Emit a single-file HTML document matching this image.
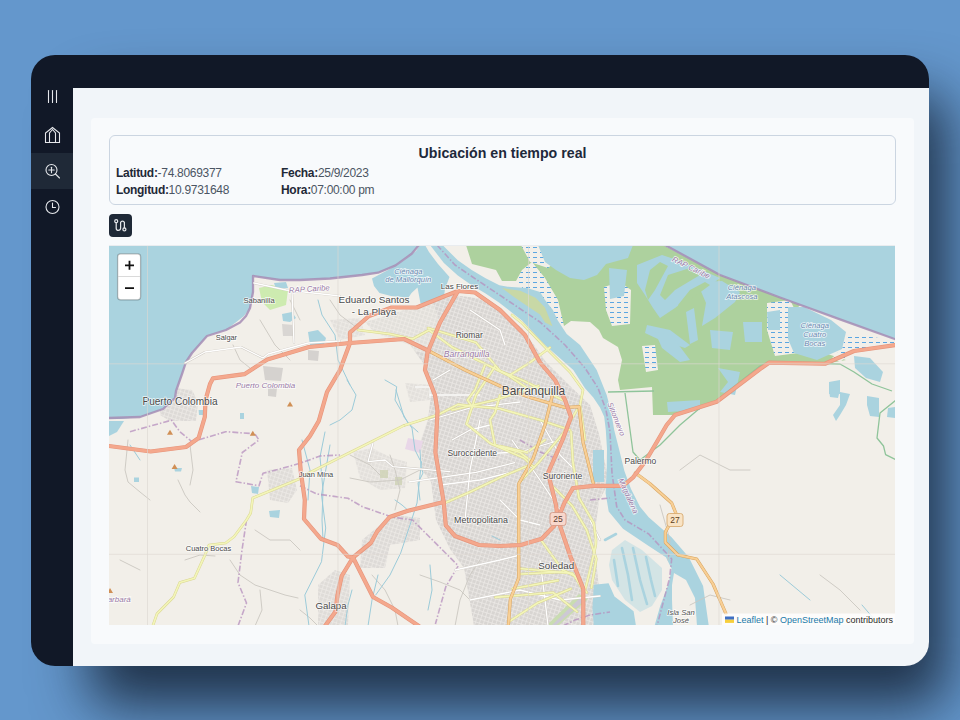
<!DOCTYPE html>
<html><head><meta charset="utf-8">
<style>
*{box-sizing:border-box;margin:0;padding:0}
html,body{width:960px;height:720px;overflow:hidden}
body{background:#6497cc;font-family:"Liberation Sans",sans-serif;position:relative}
#shadow{position:absolute;left:71px;top:55px;width:858px;height:611px;border-radius:24px;box-shadow:18px 40px 55px 0 rgba(5,12,25,.72)}
#frame{position:absolute;left:31px;top:55px;width:898px;height:611.4px;border-radius:24px;background:#111827;overflow:hidden}
#content{position:absolute;left:42px;top:33px;right:0;bottom:0;background:#f1f5f9}
#card{position:absolute;left:60px;top:62.5px;width:822.5px;height:526px;background:#f8fafc;border-radius:4px}
.abs{position:absolute}
#active{position:absolute;left:0;top:98px;width:42px;height:36px;background:#1f2937}
#info{position:absolute;left:78px;top:80px;width:787px;height:70px;border:1px solid #cbd5e1;border-radius:6px}
#title{position:absolute;left:0;right:0;top:9px;text-align:center;font-size:14.2px;font-weight:bold;color:#1e293b}
.row{position:absolute;font-size:12px;letter-spacing:-0.3px;color:#4b5563;white-space:nowrap}
.row b{color:#1f2937}
#btn{position:absolute;left:78px;top:159px;width:22.5px;height:22.5px;background:#1f2937;border-radius:4px}
#map{position:absolute;left:78px;top:189.7px;width:786px;height:380.8px;background:#f2efe9;overflow:hidden}
</style></head><body>
<div id="shadow"></div>
<div id="frame">
  <div id="active"></div>
  <svg class="abs" style="left:0;top:0" width="42" height="170" viewBox="0 0 42 170">
    <g stroke="#e5e7eb" stroke-width="1.1" stroke-linecap="round" fill="none">
      <line x1="17.5" y1="35.5" x2="17.5" y2="47.5"/><line x1="21.5" y1="35.5" x2="21.5" y2="47.5"/><line x1="25.5" y1="35.5" x2="25.5" y2="47.5"/>
      <path d="M14.5 87.5 V78 L21.5 72.5 L28.5 78 V87.5 Z"/>
      <path d="M18.5 87.5 V78 L21.5 74.5 L24.5 78 V87.5"/>
      <circle cx="20.5" cy="115" r="5.5"/><line x1="24.5" y1="119" x2="28.5" y2="123"/>
      <line x1="17.8" y1="115" x2="23.2" y2="115"/><line x1="20.5" y1="112.3" x2="20.5" y2="117.7"/>
      <circle cx="21.5" cy="152" r="6.5"/><path d="M21.5 148 V152.5 H24.5"/>
    </g>
  </svg>
  <div id="content"></div>
  <div id="card"></div>
  <div id="info">
    <div id="title">Ubicación en tiempo real</div>
    <div class="row" style="left:6px;top:29.6px"><b>Latitud:</b>-74.8069377</div>
    <div class="row" style="left:6px;top:46.6px"><b>Longitud:</b>10.9731648</div>
    <div class="row" style="left:171px;top:29.6px"><b>Fecha:</b>25/9/2023</div>
    <div class="row" style="left:171px;top:46.6px"><b>Hora:</b>07:00:00 pm</div>
  </div>
  <div id="btn"><svg width="22.5" height="22.5" viewBox="0 0 22.5 22.5" style="display:block"><g fill="none" stroke="#e5e7eb" stroke-width="1.25" stroke-linecap="round" stroke-linejoin="round"><circle cx="7.2" cy="7.2" r="1.5"/><circle cx="15.4" cy="15.4" r="1.5"/><path d="M7.2 8.7V14.2A2.2 2.2 0 0 0 11.6 14.2V8.5A2 2 0 0 1 15.4 8.5V13.9"/></g></svg></div>
  <div id="map"><svg width="786.5" height="380.5" viewBox="109 245 786.5 380.5" style="display:block;position:absolute;left:0;top:0">
<defs>
<pattern id="urb" width="4" height="4" patternUnits="userSpaceOnUse" patternTransform="rotate(18)">
<rect width="4" height="4" fill="#d8d5d2"/><path d="M0 0.4H4M0.4 0V4" stroke="#eceae7" stroke-width="0.8"/>
</pattern>
<pattern id="marsh" width="7" height="5" patternUnits="userSpaceOnUse">
<rect width="7" height="5" fill="#f2efe9"/><path d="M1 2.5H5" stroke="#4a9ee0" stroke-width="0.9"/>
</pattern>
</defs>
<rect x="109" y="245" width="786.5" height="380.5" fill="#f2efe9"/>
<!-- urban -->
<path fill="url(#urb)" d="M445,294 L484,299 522,328 546,362 570,386 590,405 599,434 609,482 599,501 594,540 599,588 599,626 474,626 464,568 450,549 436,520 431,482 422,470 421,440 428,419 431,395 426,367 410,345 375,333 365,322 392,314 436,299Z"/>
<path fill="url(#urb)" opacity="0.8" d="M362,540 L380,525 395,515 420,518 420,540 390,545 385,568 360,568Z"/>
<path fill="url(#urb)" opacity="0.75" d="M267,470 L292,468 297,490 288,503 270,500Z"/>
<path fill="url(#urb)" opacity="0.8" d="M160,395 L175,388 192,390 198,402 196,421 170,421 160,415Z"/>
<path fill="url(#urb)" opacity="0.75" d="M318,585 L335,570 350,575 348,626 318,626Z"/>
<path fill="#f2efe9" opacity="0.4" d="M352,311 L432,300 440,322 427,352 352,352Z"/>
<!-- green wetlands -->
<path fill="#add19e" d="M466,245 L663,245 720,275 780,297.5 800,305 787,320 800,345 846,360 825,364 769,363 760,369 717,402 675,415 653,415 652,387 620,390 618,380 622,360 618,347 603,338 599,330 590,322 571,321 564,326 545,300 522,281 502,281 496,270 472,264Z"/>
<!-- marsh -->
<path fill="url(#marsh)" d="M516,281 L522,270 532,262 545,278 558,300 564,326 548,318 532,298Z"/>
<path fill="url(#marsh)" d="M521,245 L545,245 560,258 548,268 530,262Z"/>
<path fill="url(#marsh)" d="M604,287 L620,282 631,290 630,324 612,326 606,310Z"/>
<path fill="url(#marsh)" d="M767,303 L790,300 800,320 798,353 775,356 767,330Z"/>
<path fill="url(#marsh)" d="M846,334 L896,340 896,346 854,351 840,362 832,358 842,349Z"/>
<path fill="url(#marsh)" d="M642,346 L655,345 658,370 646,372Z"/>
<!-- water in green -->
<g fill="#aad3df">
<path d="M538,245 L633,245 628,258 606,264 597,275 584,280 570,278 556,270 545,262Z"/>
<path d="M609,268 L627,270 624,296 610,299Z"/>
<path d="M637,265 L662,255 683,262 713,275 720,278 707,288 692,295 675,308 660,318 653,308 645,295 637,283Z"/>
<path d="M743,322 L762,322 762,342 745,342Z"/>
<path d="M647,325 L670,330 690,345 685,348 660,340 645,333Z"/>
<path d="M655,332 L672,336 690,360 680,362 662,348Z"/>
<path d="M710,330 L733,332 730,350 712,348Z"/>
<path d="M667,402 L700,400 700,410 668,412Z"/>
<path d="M718,368 L740,372 735,395 720,392 728,382Z"/>
<path d="M767,312 L780,310 780,330 768,330Z"/>
<path d="M697,282 L722,281 740,292 735,302 715,318 702,326 706,303Z"/>
<path d="M686,312 L694,308 698,340 690,344Z"/>
<path d="M788,307 L804,307 831,320 846,332 842,349 817,360 794,353 788,339Z"/>
</g>
<g fill="#add19e">
<path d="M650,270 L660,262 668,266 655,290 648,300 645,290Z"/>
<path d="M668,275 L690,268 700,275 675,290 665,300 660,295Z"/>
<path d="M690,290 L705,282 710,285 690,300 680,310 678,305Z"/>
</g>
<!-- seas -->
<g fill="#aad3df">
<path d="M109,245 L419,245 411.7,253.75 395.6,265.4 378,272.7 362,275 330,278.5 300,280 280,280 253,276 253,292 250,308 244,316 226,330 209,335 207,336 192,353 186,362 182,374 176,391 175,398 163,409 140,417 121,419 109,419Z"/>
<path d="M109,421 L124,421 117,432 109,436Z"/>
<path d="M663,245 L896,245 896,339.5 840,319.4 780,297.5 720,275Z"/>
<path d="M372,278.5 L388,270 403,261 416,251 420,245 425,245 429,252 438,264 449.5,277 445,289 444,296 432,302 420.5,303.5 417.5,287.5 411.5,293 408.5,297.5 391,296 379.5,293 374,286Z"/>
<!-- river -->
<path d="M430,245 L443.9,263 457.8,275.6 471.7,285.3 485.6,293.6 499,302.5 515,315 522,320.5 545,345 573.3,370 585,388.3 593.3,397.5 600,407.5 604.2,416.7 605.8,430 607,449 606.7,471 605.6,493.3 608.7,511.5 623,528.7 648.7,545.9 665.9,557.3 671.6,568.7 668.8,583 660.2,606 654.5,626 708.8,626 703.1,585.9 688.8,557.3 671.6,537.3 648.7,517.3 640,506.7 631,488.9 624.4,471 619,449 614.2,430 612.5,420 610,407.5 606.7,395 601.7,382.5 596.7,370 580,345 566.7,334 557.5,320 552.9,310 545,300 540,292 527.2,288 507.8,286.7 499.4,285.3 485.6,278.3 471.7,270 457.8,260.3 442.5,245Z"/>
<path d="M593,450 L604,450 604,482 593,482Z"/>
<!-- soledad wetland -->
<path d="M593.8,584.8 L608.6,583.3 614.5,596.6 633.6,611.3 636,626 593.8,626 592.4,608.4Z"/>
<path opacity="0.42" d="M612,550 L625,540 642,550 662,568 662,590 652,606 640,612 625,600 612,580 609,565Z"/>
</g>
<g fill="none" stroke="#aad3df" stroke-width="2.6" stroke-linecap="round">
<path d="M622,548 L628,575 632,600"/><path d="M633,548 L640,580 647,604"/><path d="M646,557 L651,580 655,596"/><path d="M614,560 L618,586"/><path d="M605,540 L616,534"/>
</g>
<g fill="#aad3df">
<!-- lakes right -->
<path d="M829,390 L840,390 838,398 830,397Z"/>
<path d="M840,392 L850,394 846,405 840,415 836,421 833,415 840,405Z"/>
<path d="M867,396 L879,398 879,417 870,416 867,405Z"/>
<path d="M888,408 L895,407 895,418 887,417Z"/>
<path d="M854,356 L870,358 883,372 880,382 866,378 855,368Z"/>
<path d="M829,382 L840,380 840,394 829,394Z"/>
<path d="M282,314 L292,312 296,318 290,322 283,321Z"/><path fill="#cdebb0" d="M259,288 L272,285 288,290 286,305 270,310 262,302Z"/><path d="M274,283 L286,282 288,288 276,289Z"/><path fill="#d9d6d3" d="M282,324 L294,325 294,336 283,336Z"/>
<path d="M198.6,410 L204,410 204,415 199,415Z"/><path d="M174,468 L182,468 181,471.5 175,471.5Z"/><path d="M134,477.5 L139,477.5 139,482 134,482Z"/><path d="M240,413 L244,413 244,419 240,419Z"/><path d="M251,486 L259,487 258,494 252,493Z"/><path d="M269,511 L280,510 279,518 270,517Z"/>
<path d="M308,332 L318,330 326,338 324,345 310,345Z"/>
</g>
<!-- islands -->
<path fill="#c8d8a6" d="M502,288 L520.3,290.8 535.6,297.8 545,307.5 552.5,326.3 545,322.5 540,314.4 527.2,306 513.3,296.4Z"/>
<path fill="#f2efe9" d="M674,573 L686,580 695,598 697,626 673,626 672,600 672,585Z"/>

<path fill="#e9d7e8" d="M408,438 L423,441 420,453 405,449Z"/>
<g fill="url(#urb)" opacity="0.55"><path d="M353,452 L372,448 392,458 407,462 405,488 380,490 360,478Z"/><path d="M405,383 L432,385 430,400 410,402Z"/><path d="M330,320 L360,318 365,335 340,340Z"/></g>
<g fill="#d5d2cf"><path d="M263,366 L283,368 281,381 265,380Z"/><path d="M268,388 L277,388 276,397 268,396Z"/><path d="M308,350 L319,351 318,361 308,360Z"/></g>
<path d="M546,626 L579,594 588,599 558,626Z" fill="#c9dcb1"/><path d="M551,626 L581,597 585,600 555,626Z" fill="#cdc9d4"/>
<g fill="#cfd3b5" opacity="0.8"><path d="M380,470 L388,470 388,478 380,478Z"/><path d="M395,477 L402,477 402,485 395,485Z"/></g>
<g fill="none" stroke="#cbc7c1" stroke-width="0.9" stroke-linecap="round" stroke-linejoin="round">
<path d="M178,480 L185,495 190,502 200,512"/>
<path d="M128,440 L125,470 128,482 140,492 150,500"/>
<path d="M190,445 L193,470 190,485"/>
<path d="M230,560 L240,575 255,585 270,590 285,595 298,598"/>
<path d="M185,560 L200,555 215,556"/>
<path d="M260,590 L262,610 255,626"/>
<path d="M300,610 L310,618 318,626"/>
<path d="M372,575 L385,590 395,610 398,626"/>
<path d="M420,575 L440,582 460,590 470,600"/>
<path d="M395,510 L400,490 395,470 390,455"/>
<path d="M350,455 L370,465 380,475"/>
<path d="M420,470 L400,480 370,482 350,478"/>
<path d="M680,470 L700,455 730,470 750,470"/>
<path d="M660,505 L670,540 668,560"/>
<path d="M255,530 L270,540 290,540 300,550"/>
<path d="M120,560 L140,570"/>
<path d="M480,560 L470,575 460,600 455,626"/>
<path d="M330,300 L340,315 360,330"/>
<path d="M260,320 L275,345 290,360"/>
<path d="M290,300 L300,320"/>
<path d="M233,345 L240,360 250,368"/>
<path d="M690,605 L710,595 730,600"/>
<path d="M820,575 L840,590 860,610"/>
</g>
<g fill="none" stroke="#9ccbd9" stroke-width="1" stroke-linecap="round" stroke-linejoin="round">
<path d="M375.7,595 L390,575 400.7,553 410,525 417,503 421.5,461.7"/>
<path d="M330,445 L321.5,495 325.7,528 321.5,561.7 304.8,595 309,626"/>
<path d="M385,380 L396.7,386.7 395,400 401.7,411.7 408.3,423.3 418,432"/>
<path d="M420,450 L421,466.7 423,473 418,483 420,500"/>
<path d="M347,380 L356,395 352,410 340,420 330,425"/>
<path d="M396,390 L404,417 412,428 415,450 420,460"/>
<path d="M325,432 L320,457 323,490 322,520 323,540"/>
<path d="M318,300 L322,315 335,335 338,360 350,385"/>
<path d="M302,440 L310,470 308,500"/>
<path d="M130,445 L140,460"/>
<path d="M492,536 L500,540"/>
<path d="M430,565 L432,590 428,610"/>
<path d="M352,590 L348,605 345,626"/>
<path d="M378,575 L372,600 368,626"/>
<path d="M395,500 L402,505 410,512"/>
<path d="M780,575 L810,600"/>
<path d="M862,605 L880,626"/>
</g>
<g fill="none" stroke="#a68db5" stroke-width="2.3" stroke-opacity="0.85" stroke-linejoin="round">
<path d="M109,418 L140,417 163,409 175,398 176,391 182,374 186,362 192,353 207,336 226,330 240,322.5 246,316 250,308 253,292 253,276 280,280 300,280 330,278.5 362,275 378,272.7 395.6,265.4 411.7,253.75 419,245"/>
<path d="M665,245 L720,275 780,297.5 840,319.4 896,339.5"/>
</g>
<g fill="none" stroke="#b58fbd" stroke-width="1.6" stroke-opacity="0.75" stroke-dasharray="6 2 1.5 2" stroke-linejoin="round">
<path d="M437,245 L455,265 480,282 510,302 540,322 565,345 585,368 598,388 606,410 610,431.7 612,473 616.7,506.7 625,520 648.75,534 671.7,559 669.6,578 657,626"/>
<path d="M130,431.7 L171.5,420.2 179.8,431.7 192.3,442 204.8,438 225.7,431.7 254.8,433.75 259,440 242.3,452.5 236,481.7 259,485.8 263,473.3 279.8,469 300.7,463 320,456 340,455"/>
<path d="M300,485.8 L316.7,494 348,498.3 362.5,506.7 391.7,517 412.5,520 433.3,540.8 458.3,565.8 445.8,586.7 435.4,624"/>
<path d="M246.5,520 L242,550 238,582.5 246.5,603 238,626"/>
<path d="M563,626 L575,620 590,615 610,612"/>
<path d="M520,440 L540,452 560,460"/>
<path d="M590,500 L610,498"/>
</g>
<g fill="none" stroke="#8fc49a" stroke-width="1.3" stroke-linejoin="round">
<path d="M608,392 L654,391"/>
<path d="M625,393 L633,452 640,460"/>
<path d="M640,460 L660,445 680,425 700,408 717,400 760,366 769,362 840,364 854,372 872,384 892,391"/>
<path d="M896,400 L880,413 877,438 883.5,446 885.6,454.6 896,459.8"/>
</g>
<g fill="none" stroke="#cfcac3" stroke-width="2.2" stroke-linecap="round" stroke-linejoin="round">
<path d="M408.8,482 L476,472.3 514.6,462.7"/>
<path d="M452,440 L470,430 490,425"/>
<path d="M540,420 L560,455 575,470"/>
<path d="M500,500 L520,520 540,525"/>
<path d="M185,363 L205,352 241,347 263,358 268,354 308,343 340,341"/>
<path d="M254,283 L286,290 340,296"/>
<path d="M292,292 L294,343"/>
<path d="M373,443 L368,461.7 385,460 393,466.7 450,471.7"/>
<path d="M415,387 L430,387 430,398"/>
<path d="M430,420 L470,408 520,402"/>
<path d="M460,455 L520,452 560,440"/>
<path d="M440,485 L480,480 520,470"/>
<path d="M455,570 L500,560 520,555"/>
<path d="M470,600 L520,590 560,600 600,596"/>
<path d="M430,395 L480,395"/>
<path d="M512,440 L540,480 560,510"/>
<path d="M480,420 L470,470 465,520"/>
<path d="M540,560 L545,600 548,626"/>
<path d="M470,310 L500,330 505,345"/>
<path d="M433,380 L450,370"/>
<path d="M590,520 L600,540"/>
</g>
<g fill="none" stroke="#ffffff" stroke-width="1.3" stroke-linecap="round" stroke-linejoin="round">
<path d="M408.8,482 L476,472.3 514.6,462.7"/>
<path d="M452,440 L470,430 490,425"/>
<path d="M540,420 L560,455 575,470"/>
<path d="M500,500 L520,520 540,525"/>
<path d="M185,363 L205,352 241,347 263,358 268,354 308,343 340,341"/>
<path d="M254,283 L286,290 340,296"/>
<path d="M292,292 L294,343"/>
<path d="M373,443 L368,461.7 385,460 393,466.7 450,471.7"/>
<path d="M415,387 L430,387 430,398"/>
<path d="M430,420 L470,408 520,402"/>
<path d="M460,455 L520,452 560,440"/>
<path d="M440,485 L480,480 520,470"/>
<path d="M455,570 L500,560 520,555"/>
<path d="M470,600 L520,590 560,600 600,596"/>
<path d="M430,395 L480,395"/>
<path d="M512,440 L540,480 560,510"/>
<path d="M480,420 L470,470 465,520"/>
<path d="M540,560 L545,600 548,626"/>
<path d="M470,310 L500,330 505,345"/>
<path d="M433,380 L450,370"/>
<path d="M590,520 L600,540"/>
</g>
<g fill="none" stroke="#d9d68f" stroke-width="2.6" stroke-linecap="round" stroke-linejoin="round">
<path d="M428,328 L476,342.5 500,371 524,381 562.7,400"/>
<path d="M495,366.5 L476,395 466.5,424 490.6,443.5 524,458 534,467.5"/>
<path d="M452,410 L495,400 538.6,385.8"/>
<path d="M519.4,482 L538.6,462.7 562.7,433.8 577,409.8"/>
<path d="M553,486.7 L572.3,506 586.7,530 596.3,558.8 591.5,587.7"/>
<path d="M519.4,568.5 L572.3,573.3 586.7,592.5"/>
<path d="M495.4,597.3 L553,592.5 577,611.7"/>
<path d="M358,330 L390,334 412.5,339 429,330 452.5,347.5 477.5,360 507.5,375 530,390"/>
<path d="M512,315 L522,323 545,347 570,372 583,390 580,405 585,440"/>
<path d="M550,347.5 L530,362.5 510,375"/>
<path d="M500,395 L495,412.5 490,420 495,445 520,452.5 530,460"/>
<path d="M485,365 L475,390 467.5,400 472.5,407.5"/>
<path d="M571,431.7 L573,463 579,498 593.75,523 596,540 595.8,545 589.6,572 585.4,588.75"/>
<path d="M541.7,541 L562.5,570 575,576 583.3,591"/>
<path d="M520.8,574 L562.5,572"/>
<path d="M512.5,588.75 L558,580.4"/>
<path d="M508.3,622 L537.5,603 570.8,588.75"/>
<path d="M500,446 L527,452.5 545,440"/>
<path d="M445.8,502.5 L470,492 500,477.5 530,465"/>
<path d="M404,425.4 L437.5,415 458,404.6 500,408.75 540,420 570,430"/>
</g>
<g fill="none" stroke="#f3f5b9" stroke-width="1.7" stroke-linecap="round" stroke-linejoin="round">
<path d="M428,328 L476,342.5 500,371 524,381 562.7,400"/>
<path d="M495,366.5 L476,395 466.5,424 490.6,443.5 524,458 534,467.5"/>
<path d="M452,410 L495,400 538.6,385.8"/>
<path d="M519.4,482 L538.6,462.7 562.7,433.8 577,409.8"/>
<path d="M553,486.7 L572.3,506 586.7,530 596.3,558.8 591.5,587.7"/>
<path d="M519.4,568.5 L572.3,573.3 586.7,592.5"/>
<path d="M495.4,597.3 L553,592.5 577,611.7"/>
<path d="M358,330 L390,334 412.5,339 429,330 452.5,347.5 477.5,360 507.5,375 530,390"/>
<path d="M512,315 L522,323 545,347 570,372 583,390 580,405 585,440"/>
<path d="M550,347.5 L530,362.5 510,375"/>
<path d="M500,395 L495,412.5 490,420 495,445 520,452.5 530,460"/>
<path d="M485,365 L475,390 467.5,400 472.5,407.5"/>
<path d="M571,431.7 L573,463 579,498 593.75,523 596,540 595.8,545 589.6,572 585.4,588.75"/>
<path d="M541.7,541 L562.5,570 575,576 583.3,591"/>
<path d="M520.8,574 L562.5,572"/>
<path d="M512.5,588.75 L558,580.4"/>
<path d="M508.3,622 L537.5,603 570.8,588.75"/>
<path d="M500,446 L527,452.5 545,440"/>
<path d="M445.8,502.5 L470,492 500,477.5 530,465"/>
<path d="M404,425.4 L437.5,415 458,404.6 500,408.75 540,420 570,430"/>
</g>
<g fill="none" stroke="#d9d68f" stroke-width="2.6" stroke-linecap="round" stroke-linejoin="round">
<path d="M300,477.5 L404,425.4"/>
<path d="M302.75,477.5 L252.75,498 250.7,513 246.5,520 234,536.7 225.7,543 209,545 204.8,555.4 194.4,578.3 179.8,582.5 173.6,597 157,613.75 152.75,626"/>
</g>
<g fill="none" stroke="#f3f5b9" stroke-width="1.7" stroke-linecap="round" stroke-linejoin="round">
<path d="M300,477.5 L404,425.4"/>
<path d="M302.75,477.5 L252.75,498 250.7,513 246.5,520 234,536.7 225.7,543 209,545 204.8,555.4 194.4,578.3 179.8,582.5 173.6,597 157,613.75 152.75,626"/>
</g>
<g fill="none" stroke="#d8a45f" stroke-width="3.2" stroke-linecap="round" stroke-linejoin="round">
<path d="M429,351 L465,370 500,386 530,397.5 565,407.5 579,406.7 583,442 590,470 593.75,485"/>
<path d="M552.5,395 L545,425 533,458.75 518.75,483.75 518.75,578 510.4,599 508.3,626"/>
<path d="M635.4,473 L650,483.75 671.7,503 675.8,513 665.4,532 665.4,542.5 678,555 696.7,559 713,584 725.8,613.3"/>
</g>
<g fill="none" stroke="#f8cf95" stroke-width="2.2" stroke-linecap="round" stroke-linejoin="round">
<path d="M429,351 L465,370 500,386 530,397.5 565,407.5 579,406.7 583,442 590,470 593.75,485"/>
<path d="M552.5,395 L545,425 533,458.75 518.75,483.75 518.75,578 510.4,599 508.3,626"/>
<path d="M635.4,473 L650,483.75 671.7,503 675.8,513 665.4,532 665.4,542.5 678,555 696.7,559 713,584 725.8,613.3"/>
</g>
<g fill="none" stroke="#e6957c" stroke-width="4.2" stroke-linecap="round" stroke-linejoin="round">
<path d="M350,343 L350,332.5 369,316 391.7,307.5 416.7,307.5 445,296 458,291 475,292.5 500,310 525,335 540,362.5 555,380 565,400 571,417 562.5,440 548,473 556,505 558,520 570.8,557.5 583.3,588.75 583.3,626"/>
<path d="M458,291 L440,322.5 427.5,352.5 425,370 435,395 437.5,410.8 435.4,452.5 439.6,477.5 443.75,502.5 445.8,525.4 455,536 479,545 500,546 520.8,545 541.7,538.75 554,526 558,520"/>
<path d="M109,446 L150.7,451.5 186,447 198.6,438 204.8,417 205.5,400 210,384 213,378.3 244.4,374.2 267.3,359.6 309,347 350,343 404,339 429,351"/>
<path d="M896,345 L854,351 825,363.75 769,362.7 760,369 716.7,401.7 675,415 666.7,425 658,440 645.8,460.8 633,477.5 623,485.8 593.75,485.8 573,488 564.6,502.5 556,523"/>
<path d="M350,343 L340,370 327,392 318.75,421 310,436 299,450 300.7,471 304.8,500 304,519 320.8,538.75 337.5,545 348,556.5 353,557.5"/>
<path d="M443.75,502 L408,510.8 389.6,517 377,531.7 370.8,543 353,557.5"/>
<path d="M353,557.5 L341.7,576 337.5,595 335.4,611.7 325,626"/>
<path d="M353,557.5 L373,597 391.7,607.5 418.75,626"/>
</g>
<g fill="none" stroke="#f4a88d" stroke-width="2.9" stroke-linecap="round" stroke-linejoin="round">
<path d="M350,343 L350,332.5 369,316 391.7,307.5 416.7,307.5 445,296 458,291 475,292.5 500,310 525,335 540,362.5 555,380 565,400 571,417 562.5,440 548,473 556,505 558,520 570.8,557.5 583.3,588.75 583.3,626"/>
<path d="M458,291 L440,322.5 427.5,352.5 425,370 435,395 437.5,410.8 435.4,452.5 439.6,477.5 443.75,502.5 445.8,525.4 455,536 479,545 500,546 520.8,545 541.7,538.75 554,526 558,520"/>
<path d="M109,446 L150.7,451.5 186,447 198.6,438 204.8,417 205.5,400 210,384 213,378.3 244.4,374.2 267.3,359.6 309,347 350,343 404,339 429,351"/>
<path d="M896,345 L854,351 825,363.75 769,362.7 760,369 716.7,401.7 675,415 666.7,425 658,440 645.8,460.8 633,477.5 623,485.8 593.75,485.8 573,488 564.6,502.5 556,523"/>
<path d="M350,343 L340,370 327,392 318.75,421 310,436 299,450 300.7,471 304.8,500 304,519 320.8,538.75 337.5,545 348,556.5 353,557.5"/>
<path d="M443.75,502 L408,510.8 389.6,517 377,531.7 370.8,543 353,557.5"/>
<path d="M353,557.5 L341.7,576 337.5,595 335.4,611.7 325,626"/>
<path d="M353,557.5 L373,597 391.7,607.5 418.75,626"/>
</g>
<path d="M170.0,429.7 l-3,5 h6z" fill="#d08f55"/>
<path d="M174.6,464.0 l-3,5 h6z" fill="#d08f55"/>
<path d="M252.8,430.8 l-3,5 h6z" fill="#d08f55"/>
<path d="M290.0,401.6 l-3,5 h6z" fill="#d08f55"/>
<path d="M110.0,588.0 l-3,5 h6z" fill="#d08f55"/>
<rect x="550" y="512.5" width="16" height="13" rx="2.5" fill="#f8d7cc" stroke="#d49a88" stroke-width="0.9"/>
<text x="558" y="522.2" font-size="8.5" text-anchor="middle" fill="#5b3b30">25</text>
<rect x="667" y="513.5" width="16" height="13" rx="2.5" fill="#f9e3c4" stroke="#d8ab73" stroke-width="0.9"/>
<text x="675" y="523.2" font-size="8.5" text-anchor="middle" fill="#5b4020">27</text>
<g font-family="Liberation Sans, sans-serif">
<text x="259" y="302.5" font-size="7.6" text-anchor="middle" fill="#4a4a4a" style="" stroke="#ffffff" stroke-width="1.6" stroke-opacity="0.75" paint-order="stroke">Sabanilla</text>
<text x="226.4" y="340" font-size="7.4" text-anchor="middle" fill="#4a4a4a" style="" stroke="#ffffff" stroke-width="1.6" stroke-opacity="0.75" paint-order="stroke">Salgar</text>
<text x="374" y="302.5" font-size="9.9" text-anchor="middle" fill="#4a4a4a" style="" stroke="#ffffff" stroke-width="1.6" stroke-opacity="0.75" paint-order="stroke">Eduardo Santos</text>
<text x="374" y="314.5" font-size="9.9" text-anchor="middle" fill="#4a4a4a" style="" stroke="#ffffff" stroke-width="1.6" stroke-opacity="0.75" paint-order="stroke">- La Playa</text>
<text x="459.5" y="288.5" font-size="8.0" text-anchor="middle" fill="#4a4a4a" style="" stroke="#ffffff" stroke-width="1.6" stroke-opacity="0.75" paint-order="stroke">Las Flores</text>
<text x="469.2" y="338" font-size="8.4" text-anchor="middle" fill="#4a4a4a" style="" stroke="#ffffff" stroke-width="1.6" stroke-opacity="0.75" paint-order="stroke">Riomar</text>
<text x="466.7" y="357" font-size="8.6" text-anchor="middle" fill="#9a7aa6" style="font-style:italic;" stroke="#ffffff" stroke-width="1.6" stroke-opacity="0.75" paint-order="stroke">Barranquilla</text>
<text x="533.5" y="394.6" font-size="11.9" text-anchor="middle" fill="#4a4a4a" style="" stroke="#ffffff" stroke-width="1.6" stroke-opacity="0.75" paint-order="stroke">Barranquilla</text>
<text x="180" y="405" font-size="10.1" text-anchor="middle" fill="#4a4a4a" style="" stroke="#ffffff" stroke-width="1.6" stroke-opacity="0.75" paint-order="stroke">Puerto Colombia</text>
<text x="265.5" y="388" font-size="8" text-anchor="middle" fill="#9a7aa6" style="font-style:italic;" stroke="#ffffff" stroke-width="1.6" stroke-opacity="0.75" paint-order="stroke">Puerto Colombia</text>
<text x="316" y="477" font-size="7.5" text-anchor="middle" fill="#4a4a4a" style="" stroke="#ffffff" stroke-width="1.6" stroke-opacity="0.75" paint-order="stroke">Juan Mina</text>
<text x="472.2" y="456.3" font-size="8.5" text-anchor="middle" fill="#4a4a4a" style="" stroke="#ffffff" stroke-width="1.6" stroke-opacity="0.75" paint-order="stroke">Suroccidente</text>
<text x="481" y="522.8" font-size="8.9" text-anchor="middle" fill="#4a4a4a" style="" stroke="#ffffff" stroke-width="1.6" stroke-opacity="0.75" paint-order="stroke">Metropolitana</text>
<text x="562.5" y="478.7" font-size="8.6" text-anchor="middle" fill="#4a4a4a" style="" stroke="#ffffff" stroke-width="1.6" stroke-opacity="0.75" paint-order="stroke">Suroriente</text>
<text x="640.4" y="464" font-size="8.5" text-anchor="middle" fill="#4a4a4a" style="" stroke="#ffffff" stroke-width="1.6" stroke-opacity="0.75" paint-order="stroke">Palermo</text>
<text x="556.2" y="568.5" font-size="9.8" text-anchor="middle" fill="#4a4a4a" style="" stroke="#ffffff" stroke-width="1.6" stroke-opacity="0.75" paint-order="stroke">Soledad</text>
<text x="331" y="608.8" font-size="9.7" text-anchor="middle" fill="#4a4a4a" style="" stroke="#ffffff" stroke-width="1.6" stroke-opacity="0.75" paint-order="stroke">Galapa</text>
<text x="208.5" y="551" font-size="7.5" text-anchor="middle" fill="#4a4a4a" style="" stroke="#ffffff" stroke-width="1.6" stroke-opacity="0.75" paint-order="stroke">Cuatro Bocas</text>
<text x="117" y="602" font-size="8" text-anchor="middle" fill="#9a7aa6" style="font-style:italic;" stroke="#ffffff" stroke-width="1.6" stroke-opacity="0.75" paint-order="stroke">barbará</text>
<text x="681" y="614.5" font-size="7.6" text-anchor="middle" fill="#555555" style="font-style:italic;" stroke="#ffffff" stroke-width="1.6" stroke-opacity="0.75" paint-order="stroke">Isla San</text>
<text x="681" y="623" font-size="7.6" text-anchor="middle" fill="#555555" style="font-style:italic;" stroke="#ffffff" stroke-width="1.6" stroke-opacity="0.75" paint-order="stroke">José</text>
<text x="408.3" y="273.5" font-size="7.6" text-anchor="middle" fill="#6a88b0" style="font-style:italic;" stroke="#ffffff" stroke-width="1.6" stroke-opacity="0.75" paint-order="stroke">Ciénaga</text>
<text x="408.3" y="282" font-size="7.6" text-anchor="middle" fill="#6a88b0" style="font-style:italic;" stroke="#ffffff" stroke-width="1.6" stroke-opacity="0.75" paint-order="stroke">de Mallorquín</text>
<text x="741.8" y="289.5" font-size="7.6" text-anchor="middle" fill="#6a88b0" style="font-style:italic;" stroke="#ffffff" stroke-width="1.6" stroke-opacity="0.75" paint-order="stroke">Ciénaga</text>
<text x="741.8" y="298.5" font-size="7.6" text-anchor="middle" fill="#6a88b0" style="font-style:italic;" stroke="#ffffff" stroke-width="1.6" stroke-opacity="0.75" paint-order="stroke">Atascosa</text>
<text x="814.75" y="328" font-size="7.6" text-anchor="middle" fill="#6a88b0" style="font-style:italic;" stroke="#ffffff" stroke-width="1.6" stroke-opacity="0.75" paint-order="stroke">Ciénaga</text>
<text x="814.75" y="337" font-size="7.6" text-anchor="middle" fill="#6a88b0" style="font-style:italic;" stroke="#ffffff" stroke-width="1.6" stroke-opacity="0.75" paint-order="stroke">Cuatro</text>
<text x="814.75" y="346" font-size="7.6" text-anchor="middle" fill="#6a88b0" style="font-style:italic;" stroke="#ffffff" stroke-width="1.6" stroke-opacity="0.75" paint-order="stroke">Bocas</text>
<text x="309.5" y="291.5" font-size="7.8" text-anchor="middle" fill="#9a7aa6" style="font-style:italic;" stroke="#ffffff" stroke-width="1.6" stroke-opacity="0.75" paint-order="stroke" transform="rotate(-4 309.5 291.5)">RAP Caribe</text>
<text x="690" y="270" font-size="7.8" text-anchor="middle" fill="#9a7aa6" style="font-style:italic;" stroke="#ffffff" stroke-width="1.6" stroke-opacity="0.75" paint-order="stroke" transform="rotate(26 690 270)">RAP Caribe</text>
<text x="614" y="420" font-size="7.6" text-anchor="middle" fill="#9a7aa6" style="font-style:italic;" stroke="#ffffff" stroke-width="1.6" stroke-opacity="0.75" paint-order="stroke" transform="rotate(68 614 420)">Sitionuevo</text>
<text x="626" y="497" font-size="7.6" text-anchor="middle" fill="#9a7aa6" style="font-style:italic;" stroke="#ffffff" stroke-width="1.6" stroke-opacity="0.75" paint-order="stroke" transform="rotate(66 626 497)">Magdalena</text>
</g>
<g stroke="#dcd8d2" stroke-width="0.8" fill="none" opacity="0.8"><path d="M147.5,245V626M338,245V626M528.5,245V626M719,245V626M109,363.8H896M109,554.3H896"/></g>
<path d="M109,245.5H896" stroke="#e9ecef" stroke-width="1"/>
<rect x="117.6" y="253.8" width="23" height="46" rx="3" fill="#ffffff" stroke="#000" stroke-opacity="0.25" stroke-width="1.3"/>
<path d="M118,276.5H140" stroke="#d0d0d0" stroke-width="0.8"/>
<path d="M125,265.3H134M129.5,260.8V269.8M125,288.1H134" stroke="#111" stroke-width="1.8"/>
<rect x="722" y="613.5" width="174" height="13" fill="#ffffff" fill-opacity="0.8"/>
<rect x="725" y="616.5" width="9" height="3.2" fill="#3d6fc4"/><rect x="725" y="619.7" width="9" height="3.2" fill="#f7cf3c"/>
<text x="736.5" y="622.8" font-family="Liberation Sans, sans-serif" font-size="9" fill="#2a2a2a"><tspan fill="#1a7aaa">Leaflet</tspan> | © <tspan fill="#1a7aaa">OpenStreetMap</tspan> contributors</text>
</svg></div>
</div>
</body></html>
